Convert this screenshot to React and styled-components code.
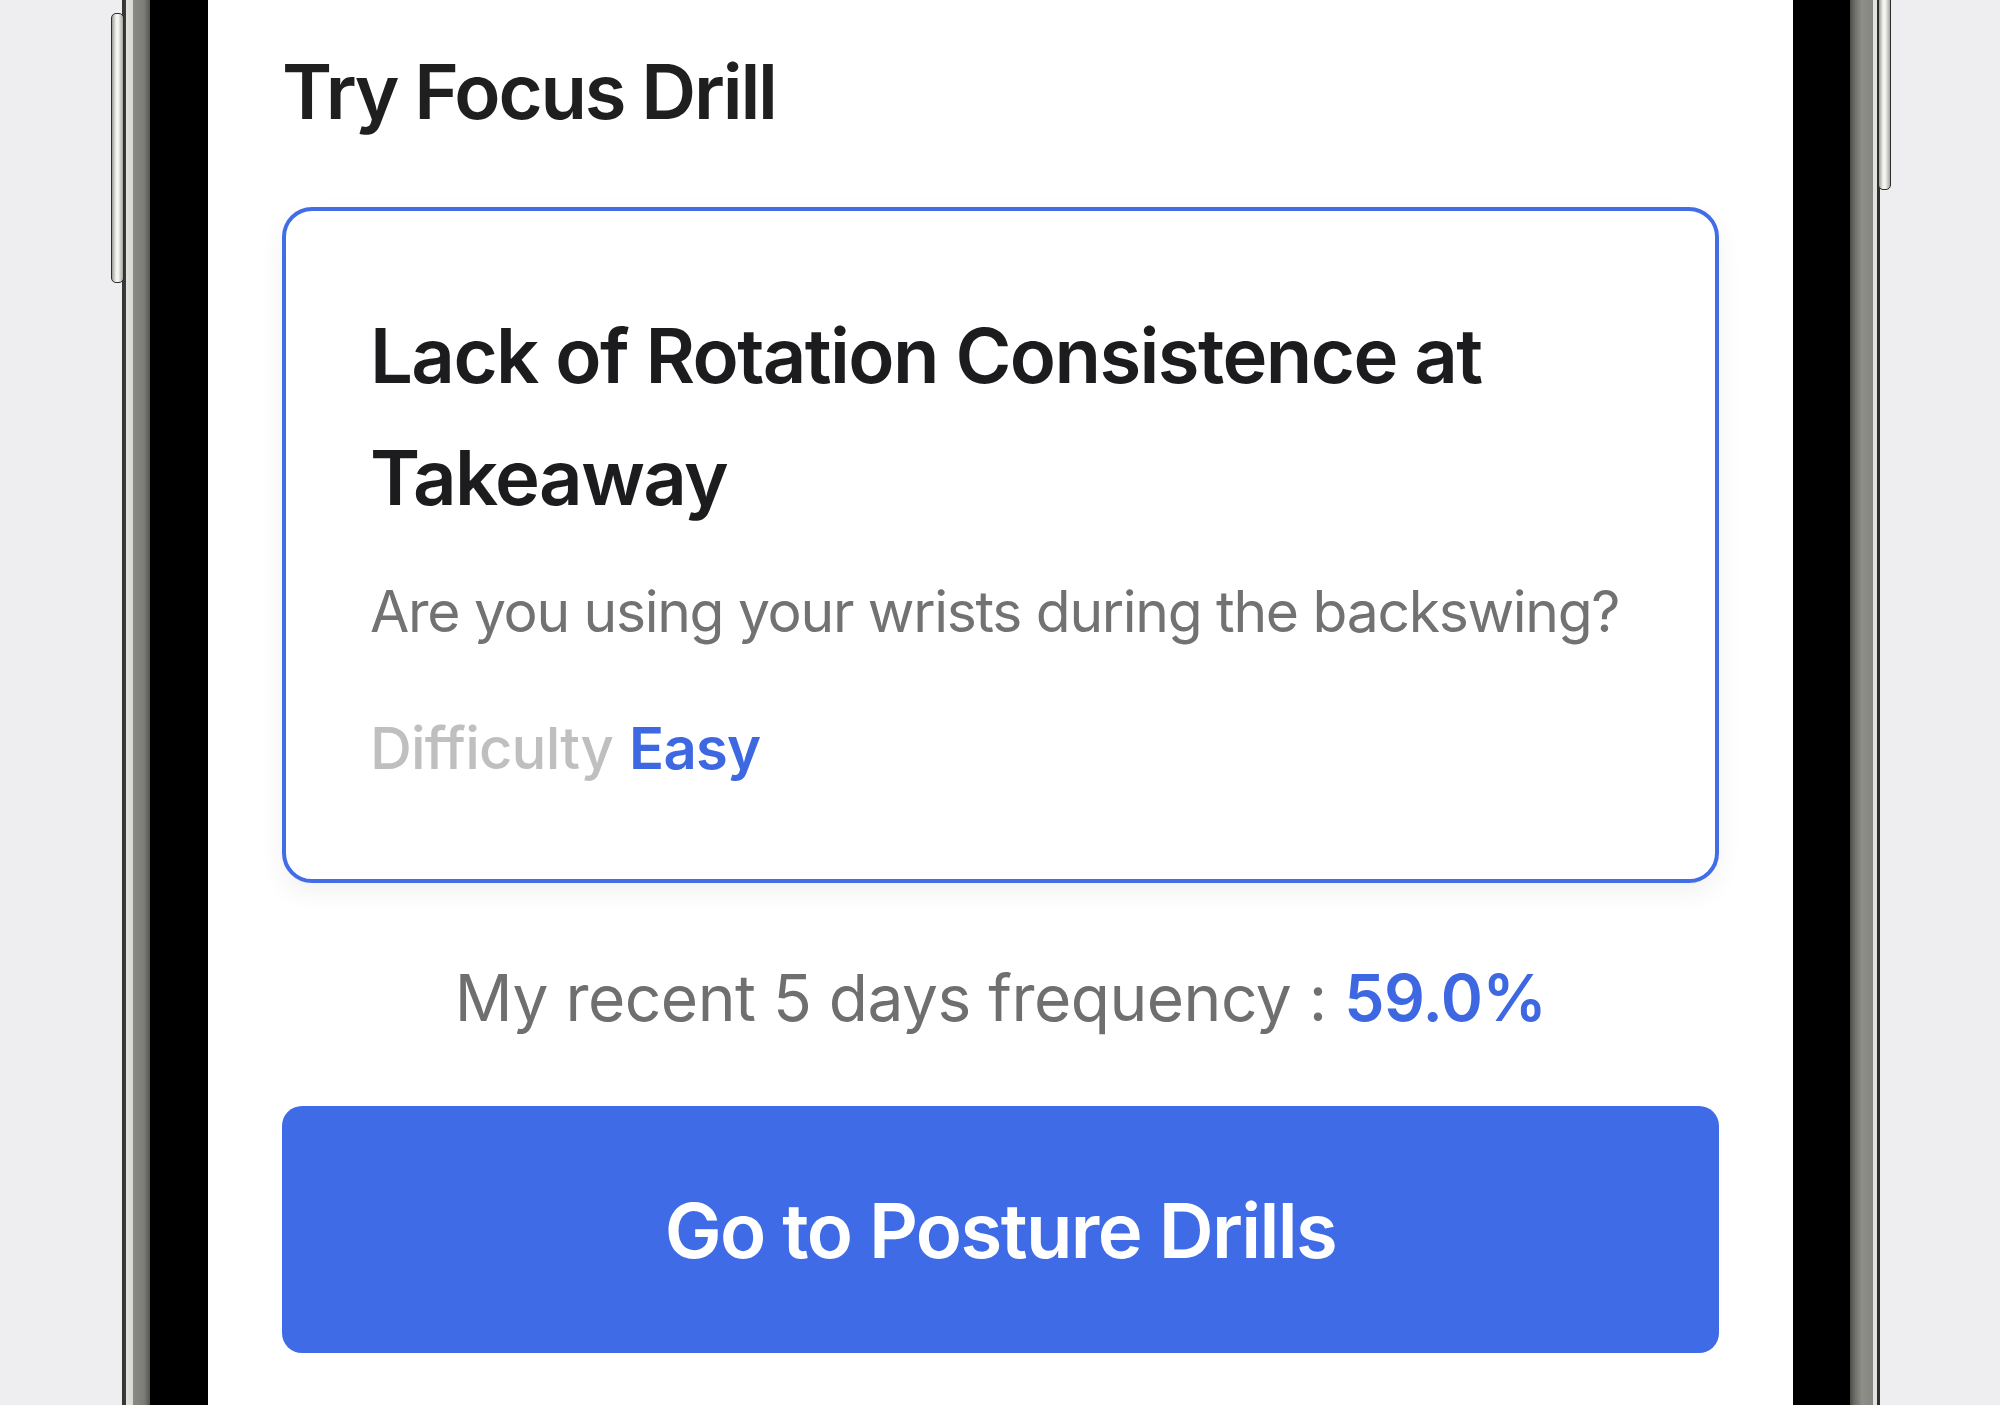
import React from "react";
import styled, { createGlobalStyle } from "styled-components";

const GlobalStyle = createGlobalStyle`
  html, body {
    margin: 0;
    padding: 0;
    background: #eeeef0;
  }
  body {
    font-family: 'Inter', 'Noto Sans', 'Liberation Sans', sans-serif;
  }
`;

const Page = styled.div`
  height: 1405px;
  overflow: hidden;
  background: #eeeef0;
  display: flex;
`;

const Phone = styled.div`
  position: relative;
  margin-left: 122px;
  width: 1758px;
  height: 1405px;
  display: flex;
`;

const Rail = styled.div`
  width: ${(p) => (p.side === "right" ? 30 : 28)}px;
  flex: none;
  background: ${(p) =>
    p.side === "right"
      ? "linear-gradient(to right, #4a4a47 0, #6f6f6a 5px, #8f8f89 12px, #85857f 23px, #e2e2df 23px, #e2e2df 27px, #2e2e2e 27px, #2e2e2e 30px)"
      : "linear-gradient(to right, #333 0, #3c3c3c 4px, #e2e2df 4px, #d6d6d2 11px, #8a8a84 11px, #7d7d77 22px, #55554f 28px)"};
`;

const SideButton = styled.div`
  position: absolute;
  top: ${(p) => p.top}px;
  height: ${(p) => p.h}px;
  ${(p) => (p.side === "right" ? "right: -11px;" : "left: -11px;")}
  width: 13px;
  border-radius: 5px;
  border: 1px solid #2d2d2d;
  box-sizing: border-box;
  background: linear-gradient(to right, #9a9a96 0, #efefed 35%, #f7f7f5 55%, #a5a5a1 100%);
`;

const Bezel = styled.div`
  flex: 1;
  background: #000;
  padding: 0 57px 0 58px;
  display: flex;
`;

const Screen = styled.div`
  flex: 1;
  background: #fff;
  padding: 46px 74px 0;
  display: flex;
  flex-direction: column;
`;

const Heading = styled.h1`
  margin: 0;
  font-size: 76px;
  line-height: 91px;
  font-weight: 600;
  letter-spacing: -2.2px;
  color: #1f1f1f;
`;

const Card = styled.div`
  margin-top: 70px;
  border: 4px solid #416de6;
  border-radius: 30px;
  padding: 83px 40px 90px 84px;
  background: #fff;
  box-shadow: 0 10px 26px rgba(0, 0, 0, 0.06);
`;

const CardTitle = styled.h2`
  margin: 0;
  font-size: 76px;
  line-height: 122px;
  font-weight: 600;
  letter-spacing: -1.6px;
  color: #1c1c1e;
`;

const CardText = styled.p`
  margin: 33px 0 0;
  font-size: 57px;
  line-height: 81px;
  font-weight: 400;
  letter-spacing: -1.3px;
  color: #727272;
`;

const MetaRow = styled.div`
  margin-top: 56px;
  display: flex;
  align-items: baseline;
  gap: 16px;
  font-size: 58px;
  line-height: 81px;
  letter-spacing: -0.8px;
`;

const MetaLabel = styled.span`
  font-weight: 500;
  color: #bfbfbf;
`;

const Accent = styled.span`
  font-weight: 600;
  color: #3d68e2;
`;

const Frequency = styled.p`
  margin: 73px 0 0;
  text-align: center;
  font-size: 64px;
  line-height: 83px;
  font-weight: 400;
  letter-spacing: -0.5px;
  color: #6f6f6f;
`;

const PrimaryButton = styled.button`
  margin-top: 67px;
  height: 247px;
  border: none;
  border-radius: 20px;
  background: #3f6ce6;
  color: #fff;
  font-family: inherit;
  font-size: 76px;
  font-weight: 600;
  letter-spacing: -1.6px;
  cursor: pointer;
`;

export default function App() {
  return (
    <>
      <GlobalStyle />
      <Page>
        <Phone>
          <SideButton side="left" top={13} h={270} />
          <SideButton side="right" top={-20} h={210} />
          <Rail side="left" />
          <Bezel>
            <Screen>
              <Heading>Try Focus Drill</Heading>
              <Card>
                <CardTitle>Lack of Rotation Consistence at Takeaway</CardTitle>
                <CardText>Are you using your wrists during the backswing?</CardText>
                <MetaRow>
                  <MetaLabel>Difficulty</MetaLabel>
                  <Accent>Easy</Accent>
                </MetaRow>
              </Card>
              <Frequency>
                My recent 5 days frequency : <Accent>59.0%</Accent>
              </Frequency>
              <PrimaryButton>Go to Posture Drills</PrimaryButton>
            </Screen>
          </Bezel>
          <Rail side="right" />
        </Phone>
      </Page>
    </>
  );
}
